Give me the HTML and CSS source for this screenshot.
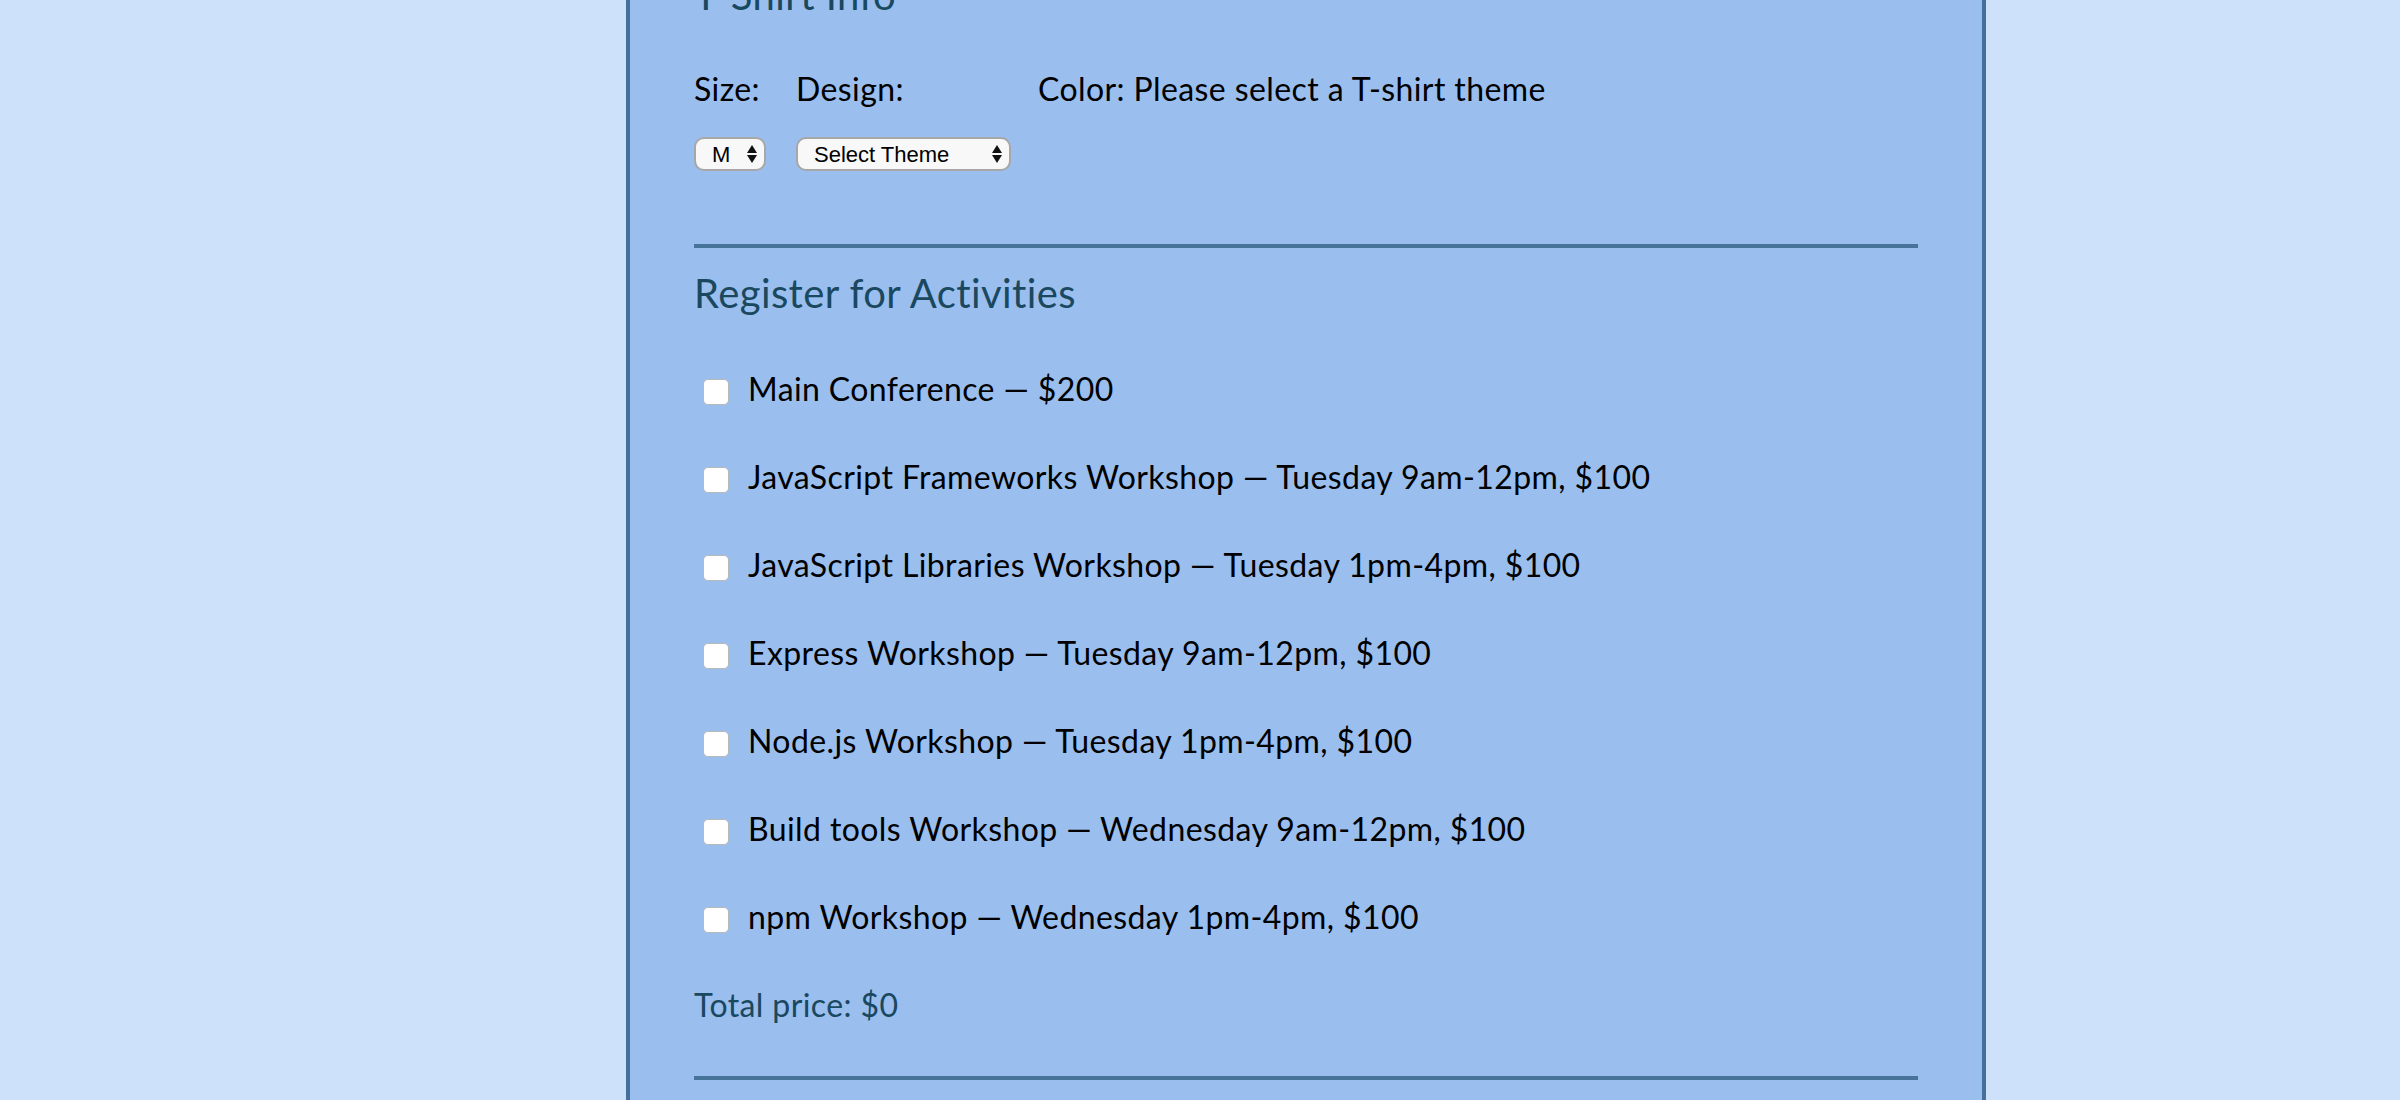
FILE: index.html
```html
<!DOCTYPE html>
<html lang="en">
<head>
<meta charset="utf-8">
<title>Conference Registration</title>
<link rel="stylesheet" href="styles.css">
</head>
<body>
<main class="panel">
  <section class="shirt">
    <h2 class="section-title">T-Shirt Info</h2>
    <div class="shirt-row">
      <div class="shirt-col col-size">
        <label class="field-label" for="size">Size:</label>
        <div class="select-wrap select-size">
          <select id="size" class="select"><option>M</option></select>
          <svg class="select-arrows" viewBox="0 0 10 18" width="10" height="18"><path d="M5 0 L10 8 L0 8 Z M0 10 L10 10 L5 18 Z" fill="#111"/></svg>
        </div>
      </div>
      <div class="shirt-col col-design">
        <label class="field-label" for="design">Design:</label>
        <div class="select-wrap select-design">
          <select id="design" class="select"><option>Select Theme</option></select>
          <svg class="select-arrows" viewBox="0 0 10 18" width="10" height="18"><path d="M5 0 L10 8 L0 8 Z M0 10 L10 10 L5 18 Z" fill="#111"/></svg>
        </div>
      </div>
      <div class="shirt-col col-color">
        <span class="field-label">Color: Please select a T-shirt theme</span>
      </div>
    </div>
  </section>
  <hr class="rule">
  <section class="activities">
    <h2 class="section-title">Register for Activities</h2>
    <label class="activity"><input type="checkbox" class="check"><span>Main Conference — $200</span></label>
    <label class="activity"><input type="checkbox" class="check"><span>JavaScript Frameworks Workshop — Tuesday 9am-12pm, $100</span></label>
    <label class="activity"><input type="checkbox" class="check"><span>JavaScript Libraries Workshop — Tuesday 1pm-4pm, $100</span></label>
    <label class="activity"><input type="checkbox" class="check"><span>Express Workshop — Tuesday 9am-12pm, $100</span></label>
    <label class="activity"><input type="checkbox" class="check"><span>Node.js Workshop — Tuesday 1pm-4pm, $100</span></label>
    <label class="activity"><input type="checkbox" class="check"><span>Build tools Workshop — Wednesday 9am-12pm, $100</span></label>
    <label class="activity"><input type="checkbox" class="check"><span>npm Workshop — Wednesday 1pm-4pm, $100</span></label>
    <p class="total">Total price: $0</p>
  </section>
  <hr class="rule">
</main>
</body>
</html>
```

FILE: styles.css
```css
html, body {
  margin: 0;
  padding: 0;
  background: #cee1fb;
  overflow: hidden;
}

body {
  font-family: "Lato", "Noto Sans", sans-serif;
  font-size: 32px;
  letter-spacing: 0.4px;
  color: #000;
  height: 1100px;
}

.panel {
  box-sizing: border-box;
  width: 1360px;
  margin: -29px 0 0 626px;
  padding: 0 64px 200px 64px;
  background: #9abeee;
  border-left: 4px solid #44709a;
  border-right: 4px solid #44709a;
}

.section-title {
  margin: 0;
  font-size: 40px;
  line-height: 48px;
  font-weight: 400;
  color: #19485f;
}

.shirt-row {
  display: flex;
  margin-top: 51px;
}

.shirt-col {
  display: flex;
  flex-direction: column;
}

.col-size { width: 72px; margin-right: 30px; }
.col-design { width: 215px; margin-right: 27px; }

.field-label {
  display: block;
  line-height: 38px;
  white-space: nowrap;
}

.select-wrap {
  position: relative;
  margin-top: 29px;
  height: 34px;
}

.select {
  -webkit-appearance: none;
  appearance: none;
  display: block;
  box-sizing: border-box;
  width: 100%;
  height: 34px;
  margin: 0;
  padding: 0 0 0 16px;
  border: 2px solid #a7a7a7;
  border-radius: 10px;
  background: #f8f8f8;
  font-family: "Liberation Sans", Arial, sans-serif;
  font-size: 22px;
  letter-spacing: 0;
  color: #000;
}

.select-arrows {
  position: absolute;
  right: 9px;
  top: 8px;
  pointer-events: none;
}

.rule {
  margin: 73px 0 0 0;
  height: 4px;
  border: 0;
  background: #47729a;
}

.activities .section-title {
  margin-top: 21px;
}

.activity {
  display: flex;
  align-items: center;
  line-height: 40px;
  margin-top: 48px;
}

.activities .section-title + .activity {
  margin-top: 52px;
}

.check {
  -webkit-appearance: none;
  appearance: none;
  box-sizing: border-box;
  width: 26px;
  height: 26px;
  margin: 6px 19px 0 9px;
  border: 1px solid #b8b8b8;
  border-radius: 5px;
  background: #fff;
  flex: none;
}

.total {
  margin: 48px 0 0 0;
  line-height: 40px;
  color: #19485f;
}

.activities + .rule {
  margin-top: 51px;
}
```
